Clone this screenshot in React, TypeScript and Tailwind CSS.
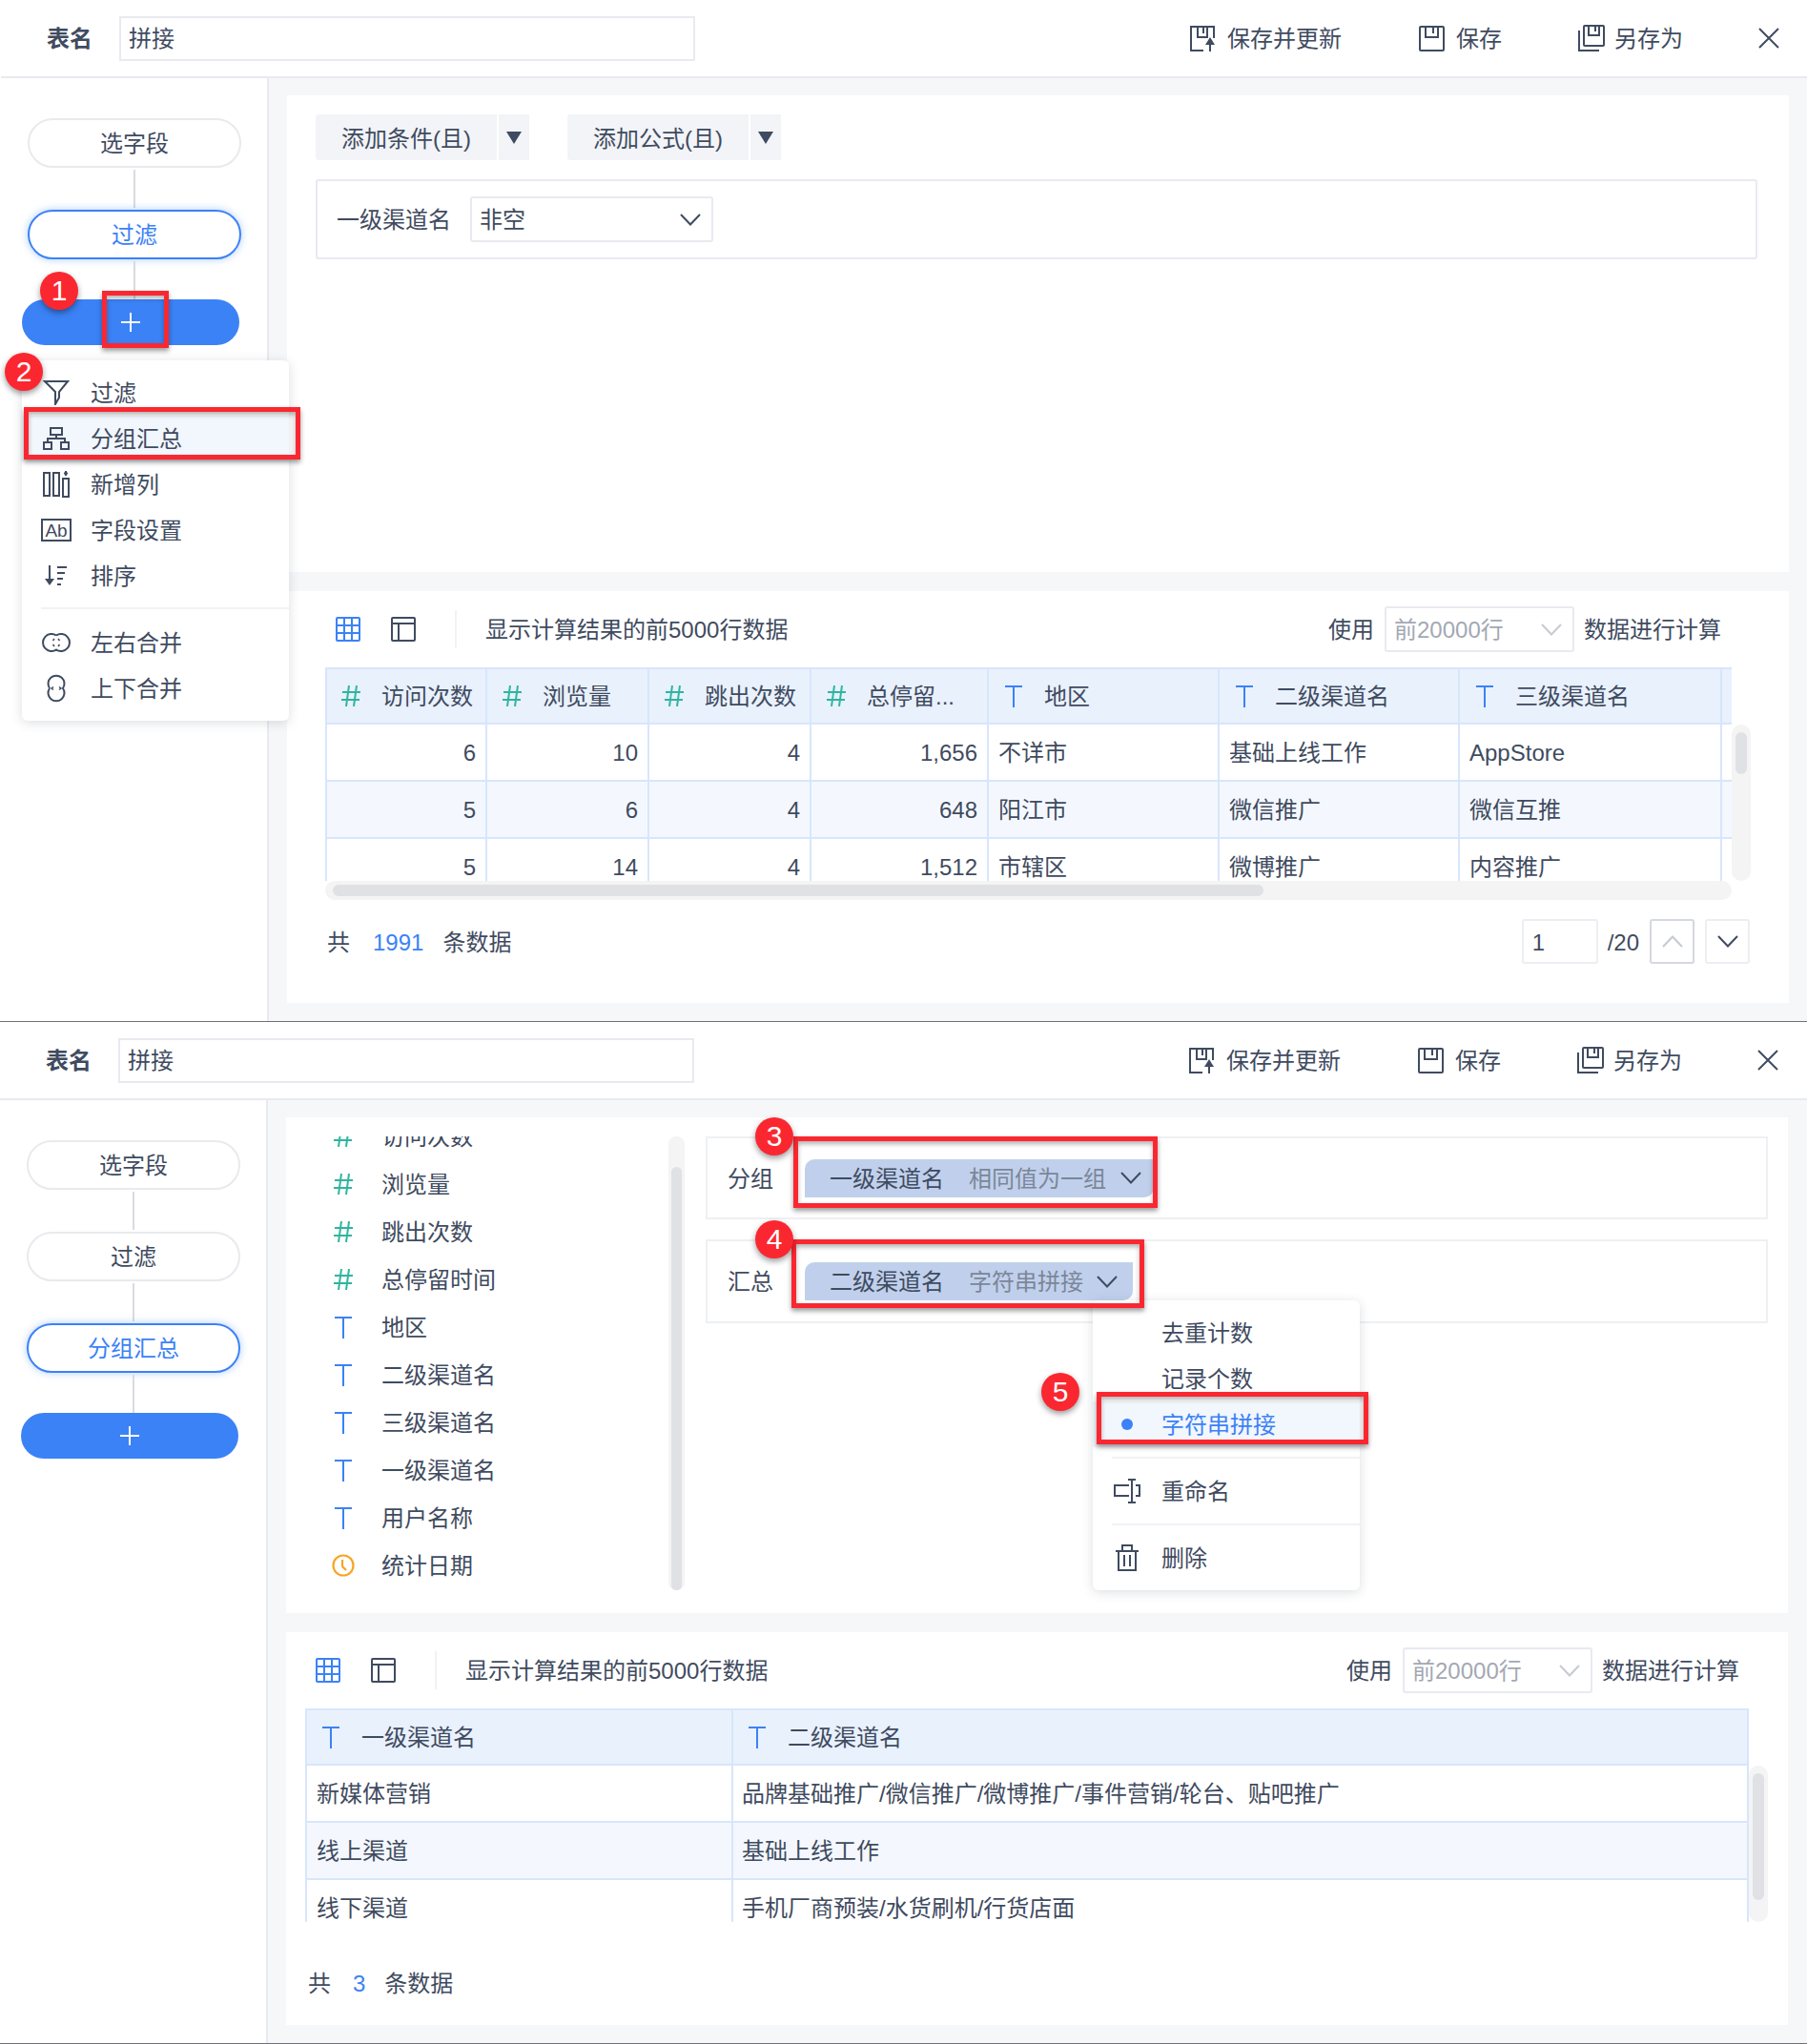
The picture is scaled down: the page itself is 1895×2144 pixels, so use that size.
import React from "react";

const INK = "#3f4b60";

function Svg({ w, h, children, color = INK, sw = 2 }: { w: number; h: number; children: React.ReactNode; color?: string; sw?: number }) {
  return (
    <svg width={w} height={h} viewBox={`0 0 ${w} ${h}`} fill="none" stroke={color} strokeWidth={sw} className="shrink-0 block">
      {children}
    </svg>
  );
}

const Chevron = ({ color = INK, up = false, w = 22 }: { color?: string; up?: boolean; w?: number }) => (
  <Svg w={w} h={13} color={color}>
    <path d={up ? `M1 12 L${w / 2} 1.5 L${w - 1} 12` : `M1 1 L${w / 2} 11.5 L${w - 1} 1`} />
  </Svg>
);
const SaveUpdate = () => (
  <Svg w={27} h={27}>
    <path d="M25 13V1H1v25h13" />
    <path d="M8 1v11h10V1M14 1v7" />
    <path d="M21 12l5 8h-10z" fill={INK} stroke="none" />
    <path d="M21 18v9" />
  </Svg>
);
const Save = () => (
  <Svg w={27} h={27}>
    <rect x="1" y="1" width="25" height="25" rx="1" />
    <path d="M7 1v11h13V1M15 1v7" />
  </Svg>
);
const SaveAs = () => (
  <Svg w={28} h={28}>
    <rect x="6" y="1" width="21" height="21" rx="1" />
    <path d="M11 1v10h11V1M18 1v6" />
    <path d="M1 6v21h21" />
  </Svg>
);
const Close = () => (
  <Svg w={22} h={22}>
    <path d="M1 1l20 20M21 1L1 21" />
  </Svg>
);
const Funnel = () => (
  <Svg w={28} h={26}>
    <path d="M2 1h24L17 12v6l-4 7V12z" />
  </Svg>
);
const GroupIcon = () => (
  <Svg w={28} h={24}>
    <rect x="8" y="1" width="12" height="7" />
    <rect x="1" y="16" width="8" height="7" />
    <rect x="19" y="16" width="8" height="7" />
    <path d="M14 8v4M5 16v-4h18v4" />
  </Svg>
);
const Columns = () => (
  <Svg w={28} h={28}>
    <rect x="1" y="2" width="6" height="24" />
    <rect x="11" y="2" width="6" height="24" />
    <rect x="21" y="8" width="6" height="19" />
    <path d="M24 0v5M22 2.5h4" />
  </Svg>
);
const AbIcon = () => (
  <div className="w-[32px] h-[24px] border-2 border-[#3f4b60] flex items-center justify-center text-[19px] leading-none shrink-0">Ab</div>
);
const SortIcon = () => (
  <Svg w={24} h={22}>
    <path d="M5 0v17" />
    <path d="M0 14h10l-5 7z" fill={INK} stroke="none" />
    <path d="M13 2h10M13 8h8M13 14h6M13 20h4" />
  </Svg>
);
const MergeH = () => (
  <Svg w={30} h={20}>
    <path d="M15 2.5A9 9 0 1 0 15 17.5A9 9 0 1 0 15 2.5" />
    <path d="M13 6l-1.5 2M17 6l1.5 2M13 14l-1.5-2M17 14l1.5-2" strokeWidth="1.5" />
  </Svg>
);
const MergeV = () => (
  <Svg w={20} h={30}>
    <path d="M3 15A8.5 8.5 0 1 1 17 15A8.5 8.5 0 1 1 3 15" />
    <path d="M7 13.5l-2 1.5 2 1.5M13 13.5l2 1.5-2 1.5" strokeWidth="1.5" />
  </Svg>
);
const GridIcon = () => (
  <Svg w={26} h={26} color="#3b82f6">
    <rect x="1" y="1" width="24" height="24" rx="1" />
    <path d="M9 1v24M17 1v24M1 9h24M1 17h24" />
  </Svg>
);
const LayoutIcon = () => (
  <Svg w={26} h={26}>
    <rect x="1" y="1" width="24" height="24" rx="1" />
    <path d="M1 7h24M8 7v18" />
  </Svg>
);
const Hash = () => (
  <Svg w={20} h={22} color="#2fb5a0">
    <path d="M8 0L5 22M16 0l-3 22M1 7h19M0 15h19" />
  </Svg>
);
const TIcon = () => (
  <Svg w={20} h={23} color="#3b82f6">
    <path d="M1 1h18M10 1v22" />
  </Svg>
);
const Clock = () => (
  <Svg w={24} h={24} color="#f5a623" sw={2.2}>
    <circle cx="12" cy="12" r="10.5" />
    <path d="M11 6v7l4 4" />
  </Svg>
);
const Rename = () => (
  <Svg w={28} h={26}>
    <path d="M16 7H1v11h15M23 7h4v11h-4" />
    <path d="M19 1v24M15 1h8M15 25h8" />
  </Svg>
);
const Trash = () => (
  <Svg w={24} h={28}>
    <path d="M0 7h24M7 6V1h10v5" />
    <path d="M3 7v20h18V7M9 11v12M15 11v12" />
  </Svg>
);

const Badge = ({ n, cls }: { n: number; cls: string }) => (
  <div className={`absolute w-10 h-10 rounded-full bg-[#fb2730] text-white flex items-center justify-center text-[30px] leading-none shadow-[0_3px_6px_rgba(0,0,0,0.4)] ${cls}`}>{n}</div>
);
const RedBox = ({ cls }: { cls: string }) => (
  <div className={`absolute border-[5px] border-[#fb2730] shadow-[0_3px_5px_rgba(0,0,0,0.4),inset_0_3px_5px_rgba(0,0,0,0.3)] ${cls}`} />
);

function Header() {
  return (
    <div className="h-[82px] shrink-0 border-b-2 border-[#e8eaef] bg-white">
      <div className="w-[1894px] h-[80px] flex items-center pl-[48px] pr-[29px]">
        <span className="font-bold">表名</span>
        <div className="ml-[28px] w-[604px] h-[47px] border-2 border-[#e9eaf0] flex items-center pl-[8px] pt-[2px]">拼接</div>
        <div className="ml-auto flex items-center">
          <SaveUpdate />
          <span className="ml-[12px]">保存并更新</span>
          <div className="ml-[81px]"><Save /></div>
          <span className="ml-[12px]">保存</span>
          <div className="ml-[80px]"><SaveAs /></div>
          <span className="ml-[10px]">另存为</span>
          <div className="ml-[79px]"><Close /></div>
        </div>
      </div>
    </div>
  );
}

function Sidebar({ steps, active }: { steps: string[]; active: string }) {
  return (
    <div className="w-[281px] shrink-0 border-r-2 border-[#e8eaef] bg-white pt-[42px] pl-[28px]">
      <div className="w-[224px] flex flex-col items-center">
        {steps.map((s, i) => (
          <React.Fragment key={s}>
            {i > 0 && <div className="w-[2px] h-[40px] my-[2px] bg-[#d9dbe0]" />}
            <div
              className={
                s === active
                  ? "w-[224px] h-[52px] rounded-[26px] border-2 border-[#3b82f6] text-[#3b82f6] flex items-center justify-center pt-[2px] shadow-[0_0_8px_rgba(59,130,246,0.4)]"
                  : "w-[224px] h-[52px] rounded-[26px] border-2 border-[#e9eaee] flex items-center justify-center pt-[2px]"
              }
            >
              {s}
            </div>
          </React.Fragment>
        ))}
        <div className="w-[2px] h-[40px] mt-[2px] bg-[#d9dbe0]" />
        <div className="w-[228px] h-[48px] rounded-[24px] bg-[#3b82f6] self-start -ml-[6px] flex items-center justify-center">
          <Svg w={20} h={20} color="#ffffff"><path d="M10 0v20M0 10h20" /></Svg>
        </div>
      </div>
    </div>
  );
}

function Toolbar({ pl, pr }: { pl: string; pr: string }) {
  return (
    <div className={`h-[80px] flex items-center ${pl} ${pr}`}>
      <GridIcon />
      <div className="ml-[32px]"><LayoutIcon /></div>
      <div className="ml-[41px] w-[2px] h-[40px] bg-[#f1f2f5]" />
      <span className="ml-[30px]">显示计算结果的前5000行数据</span>
      <span className="ml-auto">使用</span>
      <div className="ml-[11px] w-[199px] h-[48px] rounded-[3px] border-2 border-[#e9eaf0] flex items-center pl-[8px] pr-[11px] text-[#a3a8b3]">
        <span>前20000行</span>
        <div className="ml-auto"><Chevron color="#c6cad2" /></div>
      </div>
      <span className="ml-[10px]">数据进行计算</span>
    </div>
  );
}

const cols1 = "grid grid-cols-[168px_170px_170px_186px_242px_252px_275px_12px]";
const cell = "border-l-2 border-b-2 border-[#d7e6fb] flex items-center whitespace-nowrap overflow-hidden";

function HeadCell({ kind, label, pl = "pl-[15px]" }: { kind: "n" | "t"; label: string; pl?: string }) {
  return (
    <div className={`${cell} ${pl} bg-[#e9f1fd]`}>
      {kind === "n" ? <Hash /> : <TIcon />}
      <span className="ml-[22px]">{label}</span>
    </div>
  );
}

function FilterPanel() {
  return (
    <div className="h-[500px] w-[1575px] bg-white pt-[20px] pl-[30px]">
      <div className="flex">
        {["添加条件(且)", "添加公式(且)"].map((t, i) => (
          <div key={t} className={i ? "flex ml-[40px]" : "flex"}>
            <div className="w-[190px] h-[48px] bg-[#f2f4f7] rounded-l-[3px] flex items-center justify-center pt-[4px]">{t}</div>
            <div className="ml-[2px] w-[32px] h-[48px] bg-[#f2f4f7] flex items-center justify-center">
              <Svg w={16} h={14} color={INK}><path d="M0 1h16L8 14z" fill={INK} stroke="none" /></Svg>
            </div>
          </div>
        ))}
      </div>
      <div className="mt-[20px] w-[1512px] h-[84px] border-2 border-[#e9eaf0] rounded-[3px] flex items-center pl-[20px]">
        <span>一级渠道名</span>
        <div className="ml-[20px] w-[255px] h-[48px] border-2 border-[#e9eaf0] rounded-[3px] flex items-center pl-[8px] pr-[11px]">
          <span>非空</span>
          <div className="ml-auto"><Chevron /></div>
        </div>
      </div>
    </div>
  );
}

function DataPanel1() {
  const rows = [
    ["6", "10", "4", "1,656", "不详市", "基础上线工作", "AppStore"],
    ["5", "6", "4", "648", "阳江市", "微信推广", "微信互推"],
    ["5", "14", "4", "1,512", "市辖区", "微博推广", "内容推广"],
  ];
  return (
    <div className="h-[432px] w-[1575px] bg-white mt-[20px]">
      <Toolbar pl="pl-[51px]" pr="pr-[71px]" />
      <div className="flex ml-[40px]">
        <div className="w-[1475px]">
          <div className="h-[224px] overflow-hidden">
            <div className={`${cols1} h-[60px] border-t-2 border-[#d7e6fb]`}>
              <HeadCell kind="n" label="访问次数" />
              <HeadCell kind="n" label="浏览量" pl="pl-[16px]" />
              <HeadCell kind="n" label="跳出次数" pl="pl-[16px]" />
              <HeadCell kind="n" label="总停留..." pl="pl-[16px]" />
              <HeadCell kind="t" label="地区" pl="pl-[16px]" />
              <HeadCell kind="t" label="二级渠道名" pl="pl-[16px]" />
              <HeadCell kind="t" label="三级渠道名" pl="pl-[16px]" />
              <div className={`${cell} bg-[#e9f1fd]`} />
            </div>
            {rows.map((r, i) => (
              <div key={i} className={`${cols1} h-[60px] ${i === 1 ? "bg-[#f4f8fe]" : "bg-white"}`}>
                {r.map((v, j) => (
                  <div key={j} className={`${cell} ${j < 4 ? "justify-end pr-[10px]" : "pl-[10px]"}`}><span>{v}</span></div>
                ))}
                <div className={cell} />
              </div>
            ))}
          </div>
          <div className="h-[20px] rounded-[10px] bg-[#f4f4f5] px-[8px] py-[4px]">
            <div className="w-[976px] h-[12px] rounded-[6px] bg-[#dfe1e5]" />
          </div>
        </div>
        <div className="w-[20px] h-[164px] mt-[60px] rounded-[10px] bg-[#f4f4f5] px-[4px] py-[8px]">
          <div className="w-[12px] h-[44px] rounded-[6px] bg-[#dfe1e5]" />
        </div>
      </div>
      <div className="mt-[20px] h-[47px] flex items-center pl-[42px] pr-[41px]">
        <span>共</span>
        <span className="ml-[24px] text-[#3b82f6]">1991</span>
        <span className="ml-[20px]">条数据</span>
        <div className="ml-auto w-[80px] h-[47px] border-2 border-[#eceef2] rounded-[3px] flex items-center pl-[9px] pt-[2px]">1</div>
        <span className="ml-[10px]">/20</span>
        <div className="ml-[11px] w-[47px] h-[47px] border-2 border-[#d5d8de] rounded-[3px] flex items-center justify-center"><Chevron up color="#c6cad2" /></div>
        <div className="ml-[11px] w-[47px] h-[47px] border-2 border-[#eceef2] rounded-[3px] flex items-center justify-center"><Chevron /></div>
      </div>
    </div>
  );
}

function FieldPanel() {
  const fields: [string, string][] = [
    ["n", "访问次数"], ["n", "浏览量"], ["n", "跳出次数"], ["n", "总停留时间"], ["t", "地区"],
    ["t", "二级渠道名"], ["t", "三级渠道名"], ["t", "一级渠道名"], ["t", "用户名称"], ["c", "统计日期"],
  ];
  return (
    <div className="h-[520px] w-[1575px] bg-white pt-[20px] flex">
      <div className="w-[401px] h-[476px] overflow-hidden">
        <div className="-mt-[25px]">
          {fields.map(([k, t]) => (
            <div key={t} className="h-[50px] flex items-center pl-[50px]">
              <div className="w-[20px] flex justify-center">
                {k === "n" ? <Hash /> : k === "t" ? <TIcon /> : <Clock />}
              </div>
              <span className="ml-[30px]">{t}</span>
            </div>
          ))}
        </div>
      </div>
      <div className="w-[17px] h-[476px] rounded-[8px] bg-[#f4f4f5] px-[3px] pt-[32px]">
        <div className="w-[11px] h-[444px] rounded-[6px] bg-[#dfe1e5]" />
      </div>
      <div className="ml-[22px] w-[1114px]">
        <div className="h-[87px] border-2 border-[#eef0f3] flex items-center pl-[21px]">
          <span className="w-[48px]">分组</span>
          <div className="ml-[33px] w-[366px] h-[40px] bg-[#c0d0ec] rounded-tl-[10px] rounded-br-[10px] flex items-center pl-[26px]">
            <span>一级渠道名</span>
            <span className="ml-[26px] text-[#7b8698]">相同值为一组</span>
            <div className="ml-[15px]"><Chevron /></div>
          </div>
        </div>
        <div className="mt-[21px] h-[88px] border-2 border-[#eef0f3] flex items-center pl-[21px]">
          <span className="w-[48px]">汇总</span>
          <div className="ml-[33px] w-[344px] h-[40px] bg-[#c0d0ec] rounded-tl-[10px] rounded-br-[10px] flex items-center pl-[26px]">
            <span>二级渠道名</span>
            <span className="ml-[26px] text-[#7b8698]">字符串拼接</span>
            <div className="ml-[14px]"><Chevron /></div>
          </div>
        </div>
      </div>
    </div>
  );
}

function DataPanel2() {
  const rows = [
    ["新媒体营销", "品牌基础推广/微信推广/微博推广/事件营销/轮台、贴吧推广"],
    ["线上渠道", "基础上线工作"],
    ["线下渠道", "手机厂商预装/水货刷机/行货店面"],
  ];
  return (
    <div className="h-[412px] w-[1575px] bg-white mt-[20px]">
      <Toolbar pl="pl-[31px]" pr="pr-[51px]" />
      <div className="flex ml-[20px]">
        <div className="w-[1514px] h-[224px] overflow-hidden border-r-2 border-[#d7e6fb]">
          <div className="grid grid-cols-[447px_1067px] h-[60px] border-t-2 border-[#d7e6fb]">
            <HeadCell kind="t" label="一级渠道名" />
            <HeadCell kind="t" label="二级渠道名" />
          </div>
          {rows.map((r, i) => (
            <div key={i} className={`grid grid-cols-[447px_1067px] h-[60px] ${i === 1 ? "bg-[#f4f8fe]" : "bg-white"}`}>
              {r.map((v, j) => (
                <div key={j} className={`${cell} ${j === 0 ? "pl-[10px]" : "pl-[9px]"}`}><span>{v}</span></div>
              ))}
            </div>
          ))}
        </div>
        <div className="w-[20px] h-[164px] mt-[60px] rounded-[10px] bg-[#f4f4f5] px-[4px] py-[8px]">
          <div className="w-[12px] h-[133px] rounded-[6px] bg-[#dfe1e5]" />
        </div>
      </div>
      <div className="mt-[40px] h-[47px] flex items-center pl-[23px]">
        <span>共</span>
        <span className="ml-[23px] text-[#3b82f6]">3</span>
        <span className="ml-[20px]">条数据</span>
      </div>
    </div>
  );
}

function MenuItem({ icon, label, active }: { icon: React.ReactNode; label: string; active?: boolean }) {
  return (
    <div className={`h-[48px] flex items-center ${active ? "bg-[#f2f6fd]" : ""}`}>
      <div className="w-[72px] flex justify-center">{icon}</div>
      <span>{label}</span>
    </div>
  );
}

const MenuLine = () => <div className="ml-[20px] h-[2px] bg-[#f1f2f6]" />;

function AddMenu() {
  return (
    <div className="absolute left-[23px] top-[378px] w-[280px] h-[378px] bg-white rounded-[6px] shadow-[0_2px_12px_rgba(60,70,90,0.18)] pt-[10px]">
      <MenuItem icon={<Funnel />} label="过滤" />
      <MenuItem icon={<GroupIcon />} label="分组汇总" active />
      <MenuItem icon={<Columns />} label="新增列" />
      <MenuItem icon={<AbIcon />} label="字段设置" />
      <MenuItem icon={<SortIcon />} label="排序" />
      <div className="mt-[9px] mb-[11px]"><MenuLine /></div>
      <MenuItem icon={<MergeH />} label="左右合并" />
      <MenuItem icon={<MergeV />} label="上下合并" />
    </div>
  );
}

function AggMenu() {
  return (
    <div className="absolute left-[1146px] top-[292px] w-[280px] h-[304px] bg-white rounded-[6px] shadow-[0_2px_12px_rgba(60,70,90,0.18)] pt-[10px]">
      <MenuItem icon={null} label="去重计数" />
      <MenuItem icon={null} label="记录个数" />
      <div className="h-[48px] flex items-center bg-[#f2f6fd] text-[#3b82f6]">
        <div className="w-[72px] flex justify-center"><div className="w-[12px] h-[12px] rounded-full bg-[#3b82f6]" /></div>
        <span>字符串拼接</span>
      </div>
      <div className="my-[10px]"><MenuLine /></div>
      <MenuItem icon={<Rename />} label="重命名" />
      <div className="my-[10px]"><MenuLine /></div>
      <MenuItem icon={<Trash />} label="删除" />
    </div>
  );
}

export default function App() {
  return (
    <div className="w-[1895px] h-[2144px] overflow-hidden bg-white text-[24px] leading-[32px] text-[#3f4b60] font-['Liberation_Sans','Noto_Sans_CJK_SC',sans-serif] [&_span]:relative [&_span]:top-[1px]">
      <div className="relative h-[1072px] border-b border-[#6f7176] overflow-hidden">
        <div className="ml-px h-[1071px] flex flex-col">
          <Header />
          <div className="flex flex-1 min-h-0">
            <Sidebar steps={["选字段", "过滤"]} active="过滤" />
            <div className="flex-1 bg-[#f6f7f9] pt-[18px] pl-[19px]">
              <FilterPanel />
              <DataPanel1 />
            </div>
          </div>
        </div>
        <AddMenu />
        <RedBox cls="left-[107px] top-[305px] w-[70px] h-[60px]" />
        <RedBox cls="left-[25px] top-[427px] w-[290px] h-[55px]" />
        <Badge n={1} cls="left-[42px] top-[285px]" />
        <Badge n={2} cls="left-[5px] top-[370px]" />
      </div>
      <div className="relative h-[1072px] border-b border-[#6f7176] overflow-hidden">
        <div className="h-[1071px] flex flex-col">
          <Header />
          <div className="flex flex-1 min-h-0">
            <Sidebar steps={["选字段", "过滤", "分组汇总"]} active="分组汇总" />
            <div className="flex-1 bg-[#f6f7f9] pt-[18px] pl-[19px]">
              <FieldPanel />
              <DataPanel2 />
            </div>
          </div>
        </div>
        <AggMenu />
        <RedBox cls="left-[832px] top-[120px] w-[382px] h-[75px]" />
        <RedBox cls="left-[830px] top-[228px] w-[370px] h-[72px]" />
        <RedBox cls="left-[1150px] top-[388px] w-[285px] h-[55px]" />
        <Badge n={3} cls="left-[792px] top-[100px]" />
        <Badge n={4} cls="left-[792px] top-[208px]" />
        <Badge n={5} cls="left-[1092px] top-[368px]" />
      </div>
    </div>
  );
}
